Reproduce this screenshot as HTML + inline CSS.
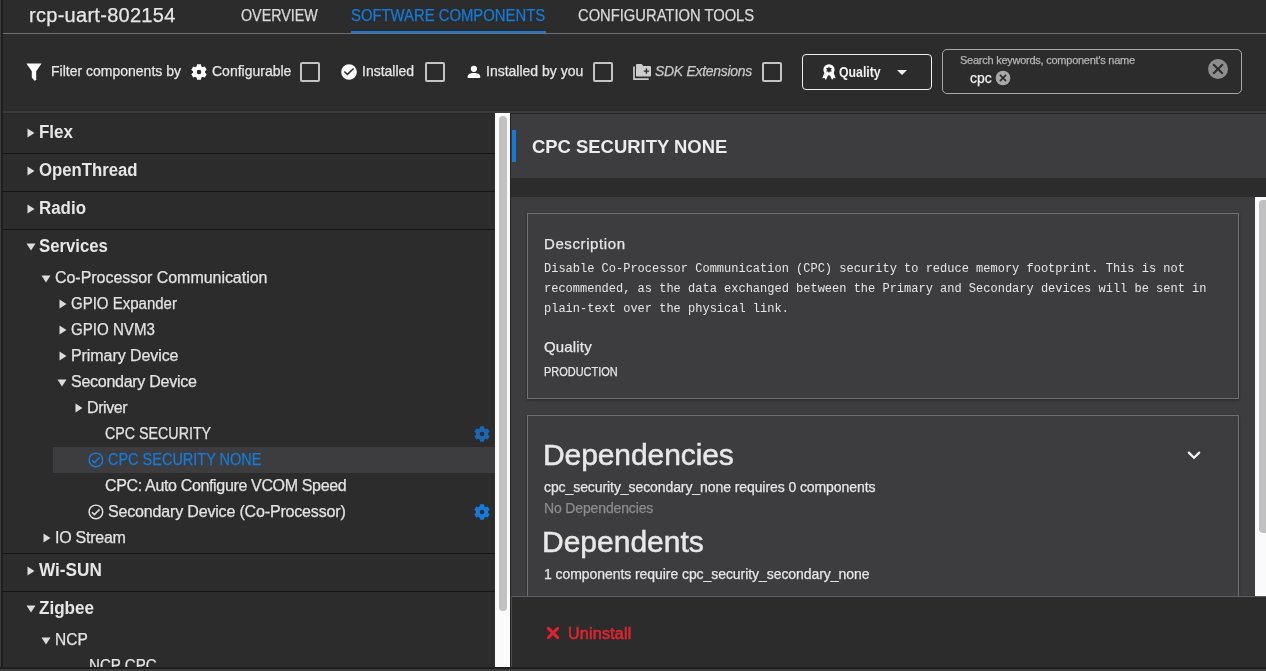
<!DOCTYPE html>
<html><head><meta charset="utf-8">
<style>
*{box-sizing:border-box;margin:0;padding:0}
html,body{width:1266px;height:671px;overflow:hidden;background:#2c2c2c;font-family:"Liberation Sans",sans-serif;color:#e6e6e6}
.a{position:absolute;white-space:nowrap}
.t{-webkit-text-stroke:0.25px currentColor}
body{will-change:transform}
</style></head>
<body>
<div class="a" style="left:0px;top:0px;width:1px;height:671px;background:#3c3c3c;"></div>
<div class="a" style="left:1px;top:0px;width:2px;height:668px;background:#1e1e1e;"></div>
<div class="a t" style="left:29px;top:5px;font:normal 20px/20px 'Liberation Sans',sans-serif;color:#e6e6e6;letter-spacing:0.286px;">rcp-uart-802154</div>
<div class="a t" style="left:241px;top:8px;font:normal 16px/16px 'Liberation Sans',sans-serif;color:#d9d9d9;transform:scaleX(0.8927);transform-origin:0 0;">OVERVIEW</div>
<div class="a t" style="left:351px;top:8px;font:normal 16px/16px 'Liberation Sans',sans-serif;color:#167ad8;transform:scaleX(0.9279);transform-origin:0 0;">SOFTWARE COMPONENTS</div>
<div class="a t" style="left:578px;top:8px;font:normal 16px/16px 'Liberation Sans',sans-serif;color:#d9d9d9;transform:scaleX(0.9215);transform-origin:0 0;">CONFIGURATION TOOLS</div>
<div class="a" style="left:3px;top:33px;width:1263px;height:1px;background:#6e6e6e;"></div>
<div class="a" style="left:351px;top:31px;width:195px;height:2px;background:#167ad8;"></div>
<div class="a t" style="left:51px;top:64px;font:normal 14px/14px 'Liberation Sans',sans-serif;color:#e6e6e6;">Filter components by</div>
<div class="a t" style="left:212px;top:64px;font:normal 14px/14px 'Liberation Sans',sans-serif;color:#e6e6e6;">Configurable</div>
<div class="a t" style="left:362px;top:64px;font:normal 14px/14px 'Liberation Sans',sans-serif;color:#e6e6e6;">Installed</div>
<div class="a t" style="left:486px;top:64px;font:normal 14px/14px 'Liberation Sans',sans-serif;color:#e6e6e6;">Installed by you</div>
<div class="a t" style="left:655px;top:64px;font:normal 14px/14px 'Liberation Sans',sans-serif;color:#c8c8c8;letter-spacing:-0.308px;font-style:italic">SDK Extensions</div>
<div class="a" style="left:300px;top:62px;width:20px;height:20px;background:transparent;border:2px solid #c4c4c4;border-radius:2px"></div>
<div class="a" style="left:425px;top:62px;width:20px;height:20px;background:transparent;border:2px solid #c4c4c4;border-radius:2px"></div>
<div class="a" style="left:593px;top:62px;width:20px;height:20px;background:transparent;border:2px solid #c4c4c4;border-radius:2px"></div>
<div class="a" style="left:762px;top:62px;width:20px;height:20px;background:transparent;border:2px solid #c4c4c4;border-radius:2px"></div>
<svg class="a" style="left:26px;top:63px" width="16" height="18" viewBox="0 0 16 18"><path d="M0.4 0.5 H15.6 L10.2 8.3 V16.9 L8.5 17.7 L5.8 14.6 V8.3 Z" fill="#ffffff"/></svg>
<svg class="a" style="left:190px;top:63px" width="18" height="18" viewBox="0 0 18 18"><path d="M6.71 3.34 L7.13 1.22 L10.87 1.22 L11.29 3.34 L12.76 4.19 L14.80 3.49 L16.67 6.73 L15.04 8.15 L15.04 9.85 L16.67 11.27 L14.80 14.51 L12.76 13.81 L11.29 14.66 L10.87 16.78 L7.13 16.78 L6.71 14.66 L5.24 13.81 L3.20 14.51 L1.33 11.27 L2.96 9.85 L2.96 8.15 L1.33 6.73 L3.20 3.49 L5.24 4.19 Z M11.30 9.00 A2.3 2.3 0 1 0 6.70 9.00 A2.3 2.3 0 1 0 11.30 9.00 Z" fill="#ffffff" fill-rule="evenodd"/></svg>
<svg class="a" style="left:341px;top:64px" width="16" height="16" viewBox="0 0 16 16"><circle cx="8" cy="8" r="7.8" fill="#ffffff"/><path d="M3.3 7.5 L6.4 10.4 L12.6 4.5" stroke="#2c2c2c" stroke-width="1.5" fill="none"/></svg>
<svg class="a" style="left:467px;top:65px" width="14" height="14" viewBox="0 0 14 14"><circle cx="6.9" cy="3.8" r="3.1" fill="#ffffff"/><path d="M0.7 13.1 V11.6 C0.7 9.2 3.5 8.1 6.9 8.1 C10.3 8.1 13.2 9.2 13.2 11.6 V13.1 Z" fill="#ffffff"/></svg>
<svg class="a" style="left:632px;top:63px" width="20" height="18" viewBox="0 0 20 18"><path d="M2 4.2 V16.2 H16" stroke="#cdcdcd" stroke-width="1.7" fill="none" stroke-linecap="round"/><path d="M4 2 Q4 1 5 1 H9.6 L11.4 2.9 H18 Q19 2.9 19 3.9 V12.6 Q19 13.5 18 13.5 H5 Q4 13.5 4 12.6 Z" fill="#cdcdcd"/><path d="M11.8 8.1 H17 M14.4 5.5 V10.7" stroke="#2c2c2c" stroke-width="1.4"/></svg>
<div class="a" style="left:802px;top:54px;width:130px;height:36px;background:transparent;border:1.5px solid #f0f0f0;border-radius:4px"></div>
<svg class="a" style="left:822px;top:64px" width="14" height="16" viewBox="0 0 14 16"><path d="M2.6 8.2 L0.3 14.2 L2.5 14 L3.9 15.9 L6.4 10.6 Z M11.4 8.2 L13.7 14.2 L11.5 14 L10.1 15.9 L7.6 10.6 Z" fill="#ffffff"/><circle cx="7" cy="5.8" r="5.6" fill="#ffffff"/><path d="M6.95 2.45 L7.95 4.02 L9.81 4.10 L8.95 5.75 L9.81 7.40 L7.95 7.48 L6.95 9.05 L5.95 7.48 L4.09 7.40 L4.95 5.75 L4.09 4.10 L5.95 4.02 Z" fill="#2c2c2c"/></svg>
<div class="a t" style="left:839px;top:65px;font:bold 14px/14px 'Liberation Sans',sans-serif;color:#f2f2f2;transform:scaleX(0.8791);transform-origin:0 0;-webkit-text-stroke:0">Quality</div>
<svg class="a" style="left:897px;top:70px" width="10" height="5" viewBox="0 0 10 5"><path d="M0 0 H10 L5 5 Z" fill="#f0f0f0"/></svg>
<div class="a" style="left:942px;top:49px;width:300px;height:45px;background:transparent;border:1.5px solid #a8a8a8;border-radius:5px"></div>
<div class="a t" style="left:960px;top:55px;font:normal 11px/11px 'Liberation Sans',sans-serif;color:#b4b4b4;letter-spacing:-0.250px;">Search keywords, component's name</div>
<div class="a t" style="left:970px;top:70px;font:normal 15px/15px 'Liberation Sans',sans-serif;color:#f0f0f0;transform:scaleX(0.9308);transform-origin:0 0;">cpc</div>
<svg class="a" style="left:995px;top:70px" width="16" height="16" viewBox="0 0 16 16"><circle cx="8" cy="8" r="7.3" fill="#a8a8a8"/><path d="M4.9 4.9 L11.1 11.1 M11.1 4.9 L4.9 11.1" stroke="#2c2c2c" stroke-width="1.7"/></svg>
<svg class="a" style="left:1208px;top:59px" width="20" height="20" viewBox="0 0 20 20"><circle cx="10" cy="10" r="10" fill="#8e8e8e"/><path d="M5.2 5.2 L14.8 14.8 M14.8 5.2 L5.2 14.8" stroke="#2c2c2c" stroke-width="2.1"/></svg>
<div class="a" style="left:3px;top:111px;width:1263px;height:2px;background:#3b3b3d;"></div>
<div class="a" style="left:3px;top:113px;width:1263px;height:1px;background:#262626;"></div>
<div class="a" style="left:3px;top:153px;width:492px;height:1px;background:#141414;"></div>
<div class="a" style="left:3px;top:191px;width:492px;height:1px;background:#141414;"></div>
<div class="a" style="left:3px;top:229px;width:492px;height:1px;background:#141414;"></div>
<div class="a" style="left:3px;top:553px;width:492px;height:1px;background:#141414;"></div>
<div class="a" style="left:3px;top:591px;width:492px;height:1px;background:#141414;"></div>
<div class="a t" style="left:39px;top:123px;font:bold 18px/18px 'Liberation Sans',sans-serif;color:#e6e6e6;transform:scaleX(0.9429);transform-origin:0 0;-webkit-text-stroke:0">Flex</div>
<svg class="a" style="left:27px;top:128px" width="8" height="10" viewBox="0 0 8 10"><path d="M0.5 0.5 L7.5 5 L0.5 9.5 Z" fill="#dcdcdc"/></svg>
<div class="a t" style="left:39px;top:161px;font:bold 18px/18px 'Liberation Sans',sans-serif;color:#e6e6e6;transform:scaleX(0.9300);transform-origin:0 0;-webkit-text-stroke:0">OpenThread</div>
<svg class="a" style="left:27px;top:166px" width="8" height="10" viewBox="0 0 8 10"><path d="M0.5 0.5 L7.5 5 L0.5 9.5 Z" fill="#dcdcdc"/></svg>
<div class="a t" style="left:39px;top:199px;font:bold 18px/18px 'Liberation Sans',sans-serif;color:#e6e6e6;transform:scaleX(0.9392);transform-origin:0 0;-webkit-text-stroke:0">Radio</div>
<svg class="a" style="left:27px;top:204px" width="8" height="10" viewBox="0 0 8 10"><path d="M0.5 0.5 L7.5 5 L0.5 9.5 Z" fill="#dcdcdc"/></svg>
<div class="a t" style="left:39px;top:237px;font:bold 18px/18px 'Liberation Sans',sans-serif;color:#e6e6e6;transform:scaleX(0.9308);transform-origin:0 0;-webkit-text-stroke:0">Services</div>
<svg class="a" style="left:26px;top:243px" width="10" height="8" viewBox="0 0 10 8"><path d="M0.5 0.5 H9.5 L5 7.5 Z" fill="#dcdcdc"/></svg>
<div class="a t" style="left:39px;top:561px;font:bold 18px/18px 'Liberation Sans',sans-serif;color:#e6e6e6;transform:scaleX(0.9538);transform-origin:0 0;-webkit-text-stroke:0">Wi-SUN</div>
<svg class="a" style="left:27px;top:566px" width="8" height="10" viewBox="0 0 8 10"><path d="M0.5 0.5 L7.5 5 L0.5 9.5 Z" fill="#dcdcdc"/></svg>
<div class="a t" style="left:39px;top:599px;font:bold 18px/18px 'Liberation Sans',sans-serif;color:#e6e6e6;transform:scaleX(0.9483);transform-origin:0 0;-webkit-text-stroke:0">Zigbee</div>
<svg class="a" style="left:26px;top:605px" width="10" height="8" viewBox="0 0 10 8"><path d="M0.5 0.5 H9.5 L5 7.5 Z" fill="#dcdcdc"/></svg>
<div class="a" style="left:53px;top:447px;width:442px;height:26px;background:#3d3d3f;"></div>
<div class="a t" style="left:55px;top:270px;font:normal 16px/16px 'Liberation Sans',sans-serif;color:#e3e3e3;letter-spacing:-0.040px;">Co-Processor Communication</div>
<svg class="a" style="left:41px;top:275px" width="10" height="8" viewBox="0 0 10 8"><path d="M0.5 0.5 H9.5 L5 7.5 Z" fill="#dcdcdc"/></svg>
<div class="a t" style="left:71px;top:296px;font:normal 16px/16px 'Liberation Sans',sans-serif;color:#e3e3e3;transform:scaleX(0.9381);transform-origin:0 0;">GPIO Expander</div>
<svg class="a" style="left:59px;top:299px" width="8" height="10" viewBox="0 0 8 10"><path d="M0.5 0.5 L7.5 5 L0.5 9.5 Z" fill="#dcdcdc"/></svg>
<div class="a t" style="left:71px;top:322px;font:normal 16px/16px 'Liberation Sans',sans-serif;color:#e3e3e3;transform:scaleX(0.9438);transform-origin:0 0;">GPIO NVM3</div>
<svg class="a" style="left:59px;top:325px" width="8" height="10" viewBox="0 0 8 10"><path d="M0.5 0.5 L7.5 5 L0.5 9.5 Z" fill="#dcdcdc"/></svg>
<div class="a t" style="left:71px;top:348px;font:normal 16px/16px 'Liberation Sans',sans-serif;color:#e3e3e3;letter-spacing:-0.077px;">Primary Device</div>
<svg class="a" style="left:59px;top:351px" width="8" height="10" viewBox="0 0 8 10"><path d="M0.5 0.5 L7.5 5 L0.5 9.5 Z" fill="#dcdcdc"/></svg>
<div class="a t" style="left:71px;top:374px;font:normal 16px/16px 'Liberation Sans',sans-serif;color:#e3e3e3;letter-spacing:-0.267px;">Secondary Device</div>
<svg class="a" style="left:57px;top:379px" width="10" height="8" viewBox="0 0 10 8"><path d="M0.5 0.5 H9.5 L5 7.5 Z" fill="#dcdcdc"/></svg>
<div class="a t" style="left:87px;top:400px;font:normal 16px/16px 'Liberation Sans',sans-serif;color:#e3e3e3;letter-spacing:-0.400px;">Driver</div>
<svg class="a" style="left:75px;top:403px" width="8" height="10" viewBox="0 0 8 10"><path d="M0.5 0.5 L7.5 5 L0.5 9.5 Z" fill="#dcdcdc"/></svg>
<div class="a t" style="left:105px;top:426px;font:normal 16px/16px 'Liberation Sans',sans-serif;color:#e3e3e3;transform:scaleX(0.8908);transform-origin:0 0;">CPC SECURITY</div>
<div class="a t" style="left:108px;top:452px;font:normal 16px/16px 'Liberation Sans',sans-serif;color:#167ad8;transform:scaleX(0.9053);transform-origin:0 0;">CPC SECURITY NONE</div>
<svg class="a" style="left:88px;top:452px" width="16" height="16" viewBox="0 0 16 16"><circle cx="7.9" cy="7.9" r="6.8" stroke="#167ad8" stroke-width="1.45" fill="none"/><path d="M3.9 8.3 L6.4 10.6 L11.6 5.4" stroke="#167ad8" stroke-width="1.5" fill="none"/></svg>
<div class="a t" style="left:105px;top:478px;font:normal 16px/16px 'Liberation Sans',sans-serif;color:#e3e3e3;letter-spacing:-0.345px;">CPC: Auto Configure VCOM Speed</div>
<div class="a t" style="left:108px;top:504px;font:normal 16px/16px 'Liberation Sans',sans-serif;color:#e3e3e3;letter-spacing:-0.167px;">Secondary Device (Co-Processor)</div>
<svg class="a" style="left:88px;top:504px" width="16" height="16" viewBox="0 0 16 16"><circle cx="7.9" cy="7.9" r="6.8" stroke="#e3e3e3" stroke-width="1.45" fill="none"/><path d="M3.9 8.3 L6.4 10.6 L11.6 5.4" stroke="#e3e3e3" stroke-width="1.5" fill="none"/></svg>
<div class="a t" style="left:55px;top:530px;font:normal 16px/16px 'Liberation Sans',sans-serif;color:#e3e3e3;letter-spacing:-0.250px;">IO Stream</div>
<svg class="a" style="left:43px;top:533px" width="8" height="10" viewBox="0 0 8 10"><path d="M0.5 0.5 L7.5 5 L0.5 9.5 Z" fill="#dcdcdc"/></svg>
<div class="a t" style="left:55px;top:632px;font:normal 16px/16px 'Liberation Sans',sans-serif;color:#e3e3e3;transform:scaleX(0.9688);transform-origin:0 0;">NCP</div>
<svg class="a" style="left:41px;top:637px" width="10" height="8" viewBox="0 0 10 8"><path d="M0.5 0.5 H9.5 L5 7.5 Z" fill="#dcdcdc"/></svg>
<div class="a t" style="left:89px;top:658px;font:normal 16px/16px 'Liberation Sans',sans-serif;color:#e3e3e3;transform:scaleX(0.9429);transform-origin:0 0;">NCP CPC</div>
<svg class="a" style="left:473px;top:425px" width="18" height="18" viewBox="0 0 18 18"><path d="M6.71 3.34 L7.13 1.22 L10.87 1.22 L11.29 3.34 L12.76 4.19 L14.80 3.49 L16.67 6.73 L15.04 8.15 L15.04 9.85 L16.67 11.27 L14.80 14.51 L12.76 13.81 L11.29 14.66 L10.87 16.78 L7.13 16.78 L6.71 14.66 L5.24 13.81 L3.20 14.51 L1.33 11.27 L2.96 9.85 L2.96 8.15 L1.33 6.73 L3.20 3.49 L5.24 4.19 Z M11.30 9.00 A2.3 2.3 0 1 0 6.70 9.00 A2.3 2.3 0 1 0 11.30 9.00 Z" fill="#1a66b0" fill-rule="evenodd"/></svg>
<svg class="a" style="left:473px;top:503px" width="18" height="18" viewBox="0 0 18 18"><path d="M6.71 3.34 L7.13 1.22 L10.87 1.22 L11.29 3.34 L12.76 4.19 L14.80 3.49 L16.67 6.73 L15.04 8.15 L15.04 9.85 L16.67 11.27 L14.80 14.51 L12.76 13.81 L11.29 14.66 L10.87 16.78 L7.13 16.78 L6.71 14.66 L5.24 13.81 L3.20 14.51 L1.33 11.27 L2.96 9.85 L2.96 8.15 L1.33 6.73 L3.20 3.49 L5.24 4.19 Z M11.30 9.00 A2.3 2.3 0 1 0 6.70 9.00 A2.3 2.3 0 1 0 11.30 9.00 Z" fill="#167ad8" fill-rule="evenodd"/></svg>
<div class="a" style="left:495px;top:113px;width:15px;height:554px;background:#fafafa;"></div>
<div class="a" style="left:499px;top:116px;width:8px;height:495px;background:#c1c1c1;border-radius:4px"></div>
<div class="a" style="left:510px;top:113px;width:1px;height:554px;background:#232323;"></div>
<div class="a" style="left:511px;top:114px;width:755px;height:64px;background:#3d3d3f;"></div>
<div class="a" style="left:512px;top:130px;width:4px;height:32px;background:#167ad8;"></div>
<div class="a t" style="left:532px;top:137px;font:bold 19px/19px 'Liberation Sans',sans-serif;color:#ececec;transform:scaleX(0.9699);transform-origin:0 0;-webkit-text-stroke:0">CPC SECURITY NONE</div>
<div class="a" style="left:511px;top:178px;width:755px;height:19px;background:#2c2c2c;"></div>
<div class="a" style="left:511px;top:197px;width:744px;height:399px;background:#3d3d3f;"></div>
<div class="a" style="left:1255px;top:197px;width:11px;height:399px;background:#fafafa;"></div>
<div class="a" style="left:1259px;top:200px;width:7px;height:333px;background:#c1c1c1;border-radius:4px 0 0 4px"></div>
<div class="a" style="left:527px;top:213px;width:712px;height:186px;background:#3d3d3f;border:1px solid #707070;box-shadow:0 1px 3px rgba(0,0,0,.35)"></div>
<div class="a t" style="left:544px;top:236px;font:normal 15px/15px 'Liberation Sans',sans-serif;color:#e6e6e6;letter-spacing:0.600px;">Description</div>
<div class="a t" style="left:544px;top:263px;font:normal 12px/12px 'Liberation Mono',monospace;color:#e6e6e6;-webkit-text-stroke:0">Disable Co-Processor Communication (CPC) security to reduce memory footprint. This is not</div>
<div class="a t" style="left:544px;top:283px;font:normal 12px/12px 'Liberation Mono',monospace;color:#e6e6e6;-webkit-text-stroke:0">recommended, as the data exchanged between the Primary and Secondary devices will be sent in</div>
<div class="a t" style="left:544px;top:303px;font:normal 12px/12px 'Liberation Mono',monospace;color:#e6e6e6;-webkit-text-stroke:0">plain-text over the physical link.</div>
<div class="a t" style="left:544px;top:339px;font:normal 15px/15px 'Liberation Sans',sans-serif;color:#e6e6e6;letter-spacing:0.167px;">Quality</div>
<div class="a t" style="left:544px;top:366px;font:normal 12px/12px 'Liberation Sans',sans-serif;color:#e6e6e6;transform:scaleX(0.9125);transform-origin:0 0;">PRODUCTION</div>
<div class="a" style="left:527px;top:415px;width:712px;height:200px;background:#3d3d3f;border:1px solid #707070;box-shadow:0 1px 3px rgba(0,0,0,.35)"></div>
<div class="a t" style="left:543px;top:440px;font:normal 30px/30px 'Liberation Sans',sans-serif;color:#e8e8e8;letter-spacing:-0.091px;-webkit-text-stroke:0.5px currentColor">Dependencies</div>
<svg class="a" style="left:1187px;top:451px" width="14" height="10" viewBox="0 0 14 10"><path d="M1.8 1.6 L7 6.8 L12.2 1.6" stroke="#f4f4f4" stroke-width="2.2" fill="none" stroke-linecap="round"/></svg>
<div class="a t" style="left:544px;top:480px;font:normal 14px/14px 'Liberation Sans',sans-serif;color:#e6e6e6;letter-spacing:-0.083px;">cpc_security_secondary_none requires 0 components</div>
<div class="a t" style="left:544px;top:501px;font:normal 14px/14px 'Liberation Sans',sans-serif;color:#8c8c8c;letter-spacing:-0.143px;">No Dependencies</div>
<div class="a t" style="left:542px;top:527px;font:normal 30px/30px 'Liberation Sans',sans-serif;color:#e8e8e8;letter-spacing:0.000px;-webkit-text-stroke:0.5px currentColor">Dependents</div>
<div class="a t" style="left:544px;top:567px;font:normal 14px/14px 'Liberation Sans',sans-serif;color:#e6e6e6;letter-spacing:-0.064px;">1 components require cpc_security_secondary_none</div>
<div class="a" style="left:511px;top:596px;width:755px;height:71px;background:#2c2c2c;border-top:1px solid #5f5f5f;border-left:1px solid #4a4a4a"></div>
<svg class="a" style="left:547px;top:627px" width="12" height="12" viewBox="0 0 12 12"><path d="M1.4 1.4 L10.6 10.6 M10.6 1.4 L1.4 10.6" stroke="#e0232e" stroke-width="3" stroke-linecap="round"/></svg>
<div class="a t" style="left:568px;top:626px;font:normal 16px/16px 'Liberation Sans',sans-serif;color:#dd2530;letter-spacing:0.250px;-webkit-text-stroke:0.6px currentColor">Uninstall</div>
<div class="a" style="left:0px;top:667px;width:1266px;height:2px;background:#1e1e1e;"></div>
<div class="a" style="left:0px;top:669px;width:1266px;height:2px;background:#3e3e3e;"></div>
</body></html>
